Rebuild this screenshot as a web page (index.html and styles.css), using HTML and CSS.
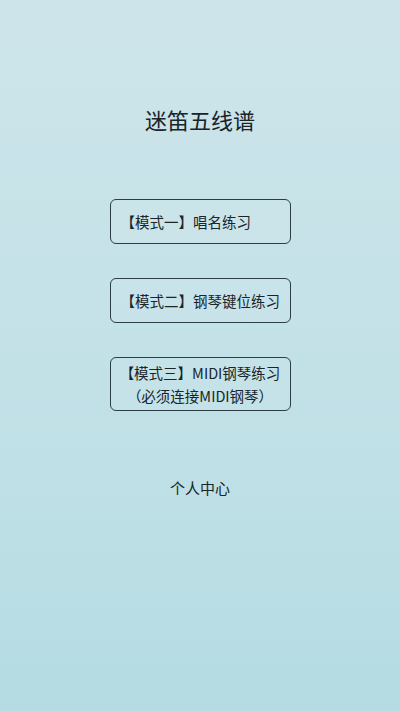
FILE: index.html
```html
<!DOCTYPE html>
<html lang="zh-CN">
<head>
<meta charset="utf-8">
<meta name="viewport" content="width=device-width, initial-scale=1">
<title>迷笛五线谱</title>
<link rel="stylesheet" href="styles.css">
</head>
<body>
<main class="screen">
  <h1 class="title">迷笛五线谱</h1>
  <nav class="modes">
    <button class="mode-btn">【模式一】唱名练习</button>
    <button class="mode-btn">【模式二】钢琴键位练习</button>
    <button class="mode-btn mode-btn--center">【模式三】MIDI钢琴练习<br>（必须连接MIDI钢琴）</button>
  </nav>
  <a class="profile">个人中心</a>
</main>
</body>
</html>
```

FILE: styles.css
```css
* { box-sizing: border-box; }
html, body {
  margin: 0;
  padding: 0;
}
body {
  width: 400px;
  height: 711px;
  overflow: hidden;
  background: linear-gradient(180deg, #cde5ea 0%, #c4e2e8 45%, #b5dce3 100%);
  font-family: "Noto Sans CJK SC", "Noto Sans", sans-serif;
  color: #1a252a;
}
.screen {
  display: flex;
  flex-direction: column;
  align-items: center;
  padding-top: 104px;
}
.title {
  margin: 0;
  font-size: 22px;
  line-height: 30px;
  font-weight: 400;
  color: #1a2328;
}
.modes {
  display: flex;
  flex-direction: column;
  gap: 34px;
  margin-top: 65px;
}
.mode-btn {
  width: 181px;
  height: 45px;
  padding: 0 0 0 10px;
  border: 1.5px solid #2c3d44;
  border-radius: 6px;
  background: rgba(255, 255, 255, 0.06);
  font-family: inherit;
  font-size: 14.5px;
  line-height: 23px;
  color: #1a252a;
  text-align: left;
  white-space: nowrap;
}
.mode-btn--center {
  height: 54px;
  text-align: center;
  padding: 0;
}
.profile {
  margin-top: 67px;
  font-size: 15px;
  line-height: 20px;
  color: #1a252a;
}
```
